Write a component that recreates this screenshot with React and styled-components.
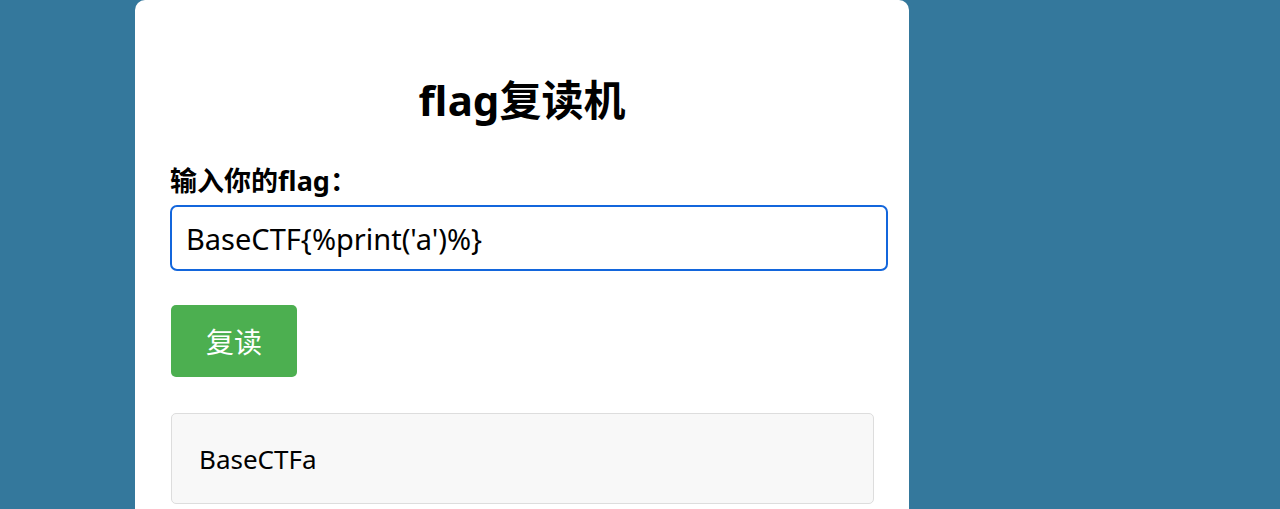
import React, { useEffect, useRef } from 'react';
import styled, { createGlobalStyle } from 'styled-components';

const GlobalStyle = createGlobalStyle`
  html, body {
    margin: 0;
    background: #34789c;
    font-family: "Noto Sans", "Noto Sans CJK SC", sans-serif;
  }
`;

const Page = styled.div`
  padding-left: 135px;
`;

const Card = styled.div`
  width: 774px;
  min-height: 540px;
  box-sizing: border-box;
  background: #fff;
  border-radius: 10px;
  padding: 74px 35px 40px;
`;

const Title = styled.h1`
  margin: 0;
  font-size: 42px;
  line-height: 52px;
  font-weight: 700;
  text-align: center;
  color: #000;
`;

const Label = styled.label`
  display: block;
  margin-top: 38px;
  font-size: 27px;
  line-height: 34px;
  font-weight: 700;
  color: #000;
`;

const Input = styled.input`
  display: block;
  box-sizing: border-box;
  width: calc(100% + 14px);
  height: 66px;
  margin-top: 7px;
  padding: 0 14px;
  border: 2px solid #1366dc;
  border-radius: 7px;
  outline: none;
  font-family: inherit;
  font-size: 29px;
  color: #000;
  background: #fff;
`;

const Button = styled.button`
  display: block;
  width: 126px;
  height: 72px;
  margin: 34px 0 0 1px;
  border: none;
  border-radius: 5px;
  background: #4caf50;
  color: #fff;
  font-family: inherit;
  font-size: 28px;
  cursor: pointer;
`;

const Result = styled.div`
  display: flex;
  align-items: center;
  height: 91px;
  box-sizing: border-box;
  margin: 36px 0 0 1px;
  padding: 0 27px;
  background: #f8f8f8;
  border: 1px solid #ddd;
  border-radius: 5px;
  font-size: 26px;
  color: #000;
`;

const App = () => {
  const inputRef = useRef(null);

  useEffect(() => {
    const el = inputRef.current;
    if (!el) return;
    el.focus();
    el.setSelectionRange(el.value.length, el.value.length);
  }, []);

  return (
    <Page>
      <GlobalStyle />
      <Card>
        <Title>flag复读机</Title>
        <Label htmlFor="flag">输入你的flag：</Label>
        <Input id="flag" ref={inputRef} defaultValue="BaseCTF{%print('a')%}" />
        <Button>复读</Button>
        <Result>BaseCTFa</Result>
      </Card>
    </Page>
  );
};

export default App;
